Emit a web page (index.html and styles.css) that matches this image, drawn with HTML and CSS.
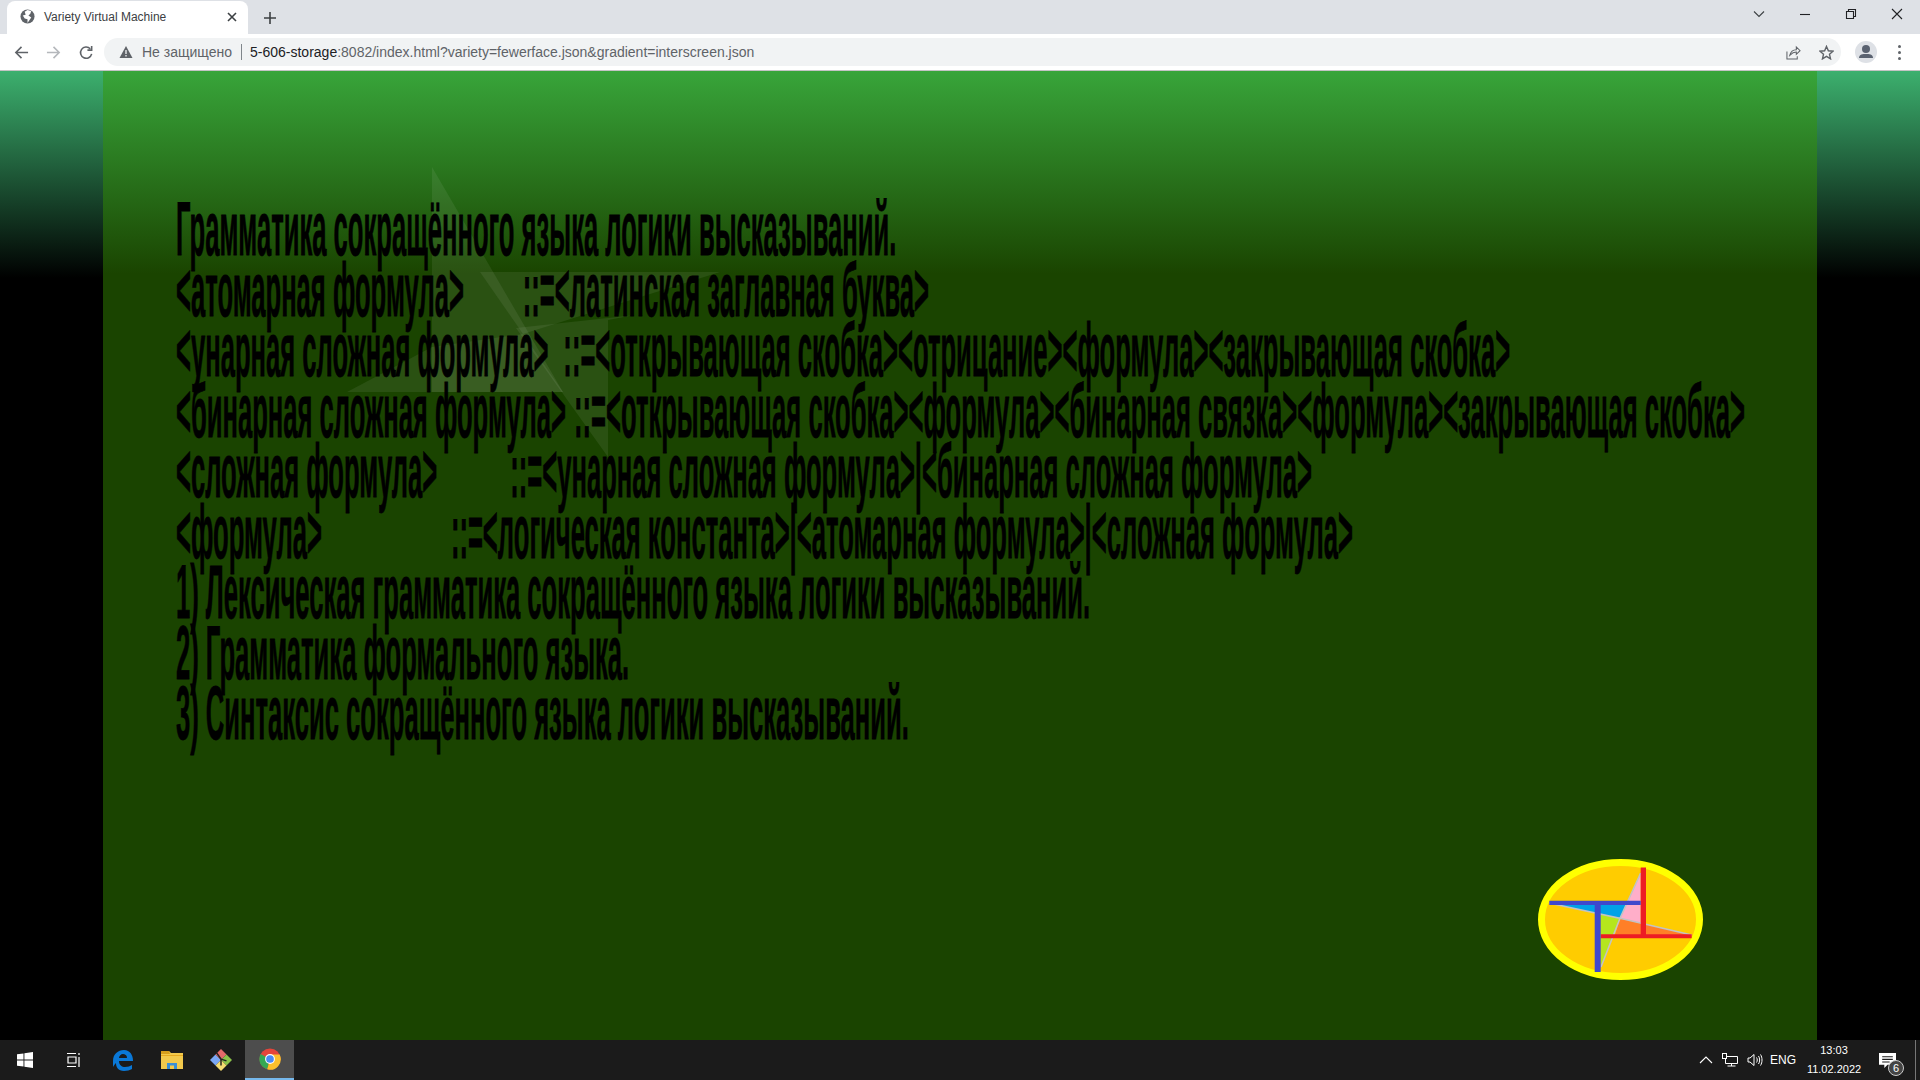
FILE: index.html
```html
<!DOCTYPE html>
<html lang="en">
<head>
  <meta charset="UTF-8">
  <title>Variety Virtual Machine</title>
  <link rel="stylesheet" href="styles.css">
</head>
<body>
  <header class="browser">
    <div class="tabstrip">
      <div class="tab">
        <svg class="favicon" viewBox="0 0 16 16"><circle cx="8" cy="8" r="7.5" fill="#5f6368"/><path d="M8 1 L5 3 L6 6 L3 7 L5 10 L8 11 L8 15 L10 12 L12 9 L9 7 L11 5 L12 2Z" fill="#fff"/></svg>
        <span class="tab-title">Variety Virtual Machine</span>
        <svg class="tab-close" viewBox="0 0 10 10"><path d="M1 1L9 9M9 1L1 9" stroke="#3c4043" stroke-width="1.6"/></svg>
      </div>
      <svg class="new-tab" viewBox="0 0 12 12"><path d="M6 0V12M0 6H12" stroke="#3c4043" stroke-width="1.6"/></svg>
      <div class="window-buttons">
        <svg class="win-icon" viewBox="0 0 12 12"><path d="M1 3.5L6 8.5L11 3.5" fill="none" stroke="#3c4043" stroke-width="1.1"/></svg>
        <svg class="win-icon" viewBox="0 0 12 12"><path d="M1 6.5H11" stroke="#202124" stroke-width="1.1"/></svg>
        <svg class="win-icon" viewBox="0 0 12 12"><path d="M1.5 3.5H8.5V10.5H1.5ZM3.5 3.5V1.5H10.5V8.5H8.5" fill="none" stroke="#202124" stroke-width="1.1"/></svg>
        <svg class="win-icon" viewBox="0 0 12 12"><path d="M1 1L11 11M11 1L1 11" stroke="#202124" stroke-width="1.1"/></svg>
      </div>
    </div>
    <div class="toolbar">
      <svg class="nav-icon" viewBox="0 0 16 16"><path d="M15 8H2M8 2L2 8L8 14" fill="none" stroke="#5f6368" stroke-width="1.7"/></svg>
      <svg class="nav-icon" viewBox="0 0 16 16"><path d="M1 8H14M8 2L14 8L8 14" fill="none" stroke="#b5b8bc" stroke-width="1.7"/></svg>
      <svg class="nav-icon" viewBox="0 0 16 16"><path d="M13.5 9.5A6 6 0 1 1 12 4M13.5 1V5.5H9" fill="none" stroke="#5f6368" stroke-width="1.7"/></svg>
      <div class="omnibox">
        <svg class="warn" viewBox="0 0 14 14"><path d="M7 1L13.5 13H0.5Z" fill="#5f6368"/><path d="M7 5V9M7 10V11.5" stroke="#f1f3f4" stroke-width="1.3"/></svg>
        <span class="not-secure">Не защищено</span>
        <span class="sep"></span>
        <span class="url"><b>5-606-storage</b>:8082/index.html?variety=fewerface.json&amp;gradient=interscreen.json</span>
        <svg class="omni-icon share" viewBox="0 0 16 16"><path d="M1 7V15H12V12M4 11C5 7 8 5 11 5V2L15 6L11 10V7.5C8 7.5 6 9 4 11Z" fill="none" stroke="#5f6368" stroke-width="1.1"/></svg>
        <svg class="omni-icon" viewBox="0 0 16 16"><path d="M8 1.5L10 6.2L15 6.6L11.2 9.9L12.3 14.8L8 12.2L3.7 14.8L4.8 9.9L1 6.6L6 6.2Z" fill="none" stroke="#5f6368" stroke-width="1.5"/></svg>
      </div>
      <div class="avatar"><svg viewBox="0 0 22 22"><circle cx="11" cy="8" r="4" fill="#5a6270"/><path d="M4 17C4 13 8 13 11 13C14 13 18 13 18 17Z" fill="#5a6270"/></svg></div>
      <div class="dots"><i></i><i></i><i></i></div>
    </div>
  </header>

  <main class="viewport">
    <div class="stage">
      <svg class="star" viewBox="0 0 420 440">
        <g fill="#fff" fill-opacity="0.07">
          <polygon points="112,17 243,242 112,242"/>
          <polygon points="400,122 160,122 203,184"/>
          <polygon points="288,307 196,178 315,165 288,170"/>
          <polygon points="27,242 112,197 203,184 243,242"/>
        </g>
      </svg>
      <div class="slide">
        <div class="slide-text">
          <p>Грамматика сокращённого языка логики высказываний.</p>
          <p>&lt;атомарная формула&gt;<span class="gap-a"></span>::=&lt;латинская заглавная буква&gt;</p>
          <p>&lt;унарная сложная формула&gt;<span class="gap-b"></span>::=&lt;открывающая скобка&gt;&lt;отрицание&gt;&lt;формула&gt;&lt;закрывающая скобка&gt;</p>
          <p>&lt;бинарная сложная формула&gt;<span class="gap-c"></span>::=&lt;открывающая скобка&gt;&lt;формула&gt;&lt;бинарная связка&gt;&lt;формула&gt;&lt;закрывающая скобка&gt;</p>
          <p>&lt;сложная формула&gt;<span class="gap-d"></span>::=&lt;унарная сложная формула&gt;|&lt;бинарная сложная формула&gt;</p>
          <p>&lt;формула&gt;<span class="gap-e"></span>::=&lt;логическая константа&gt;|&lt;атомарная формула&gt;|&lt;сложная формула&gt;</p>
          <p>1) Лексическая грамматика сокращённого языка логики высказываний.</p>
          <p>2) Грамматика формального языка.</p>
          <p>3) Синтаксис сокращённого языка логики высказываний.</p>
        </div>
      </div>
      <svg class="badge" viewBox="0 0 165 121">
        <ellipse cx="82.5" cy="60.5" rx="79" ry="57" fill="#ffcc00" stroke="#ffff00" stroke-width="7"/>
        <polygon points="11,44 89,44 82,59.3" fill="#00a2e8"/>
        <polygon points="102.7,14 102.7,64 82,59.3 89,44" fill="#ffaec9"/>
        <polygon points="82,59.3 153.7,76 77,76" fill="#ff7f27"/>
        <polygon points="62,55 82,59.3 62.7,108" fill="#b5e61d"/>
        <path d="M11 44L82 59.3L102.7 14M82 59.3L63 108M82 59.3L153.7 76" fill="none" stroke="#c3c3c3" stroke-width="1.6"/>
        <path d="M102.7 8.5H108V75.3H153.7V79.3H62.7V75.3H102.7Z" fill="#ed1c24"/>
        <path d="M11.3 41.7H102.7V46H62.7V113H56.7V46H11.3Z" fill="#3f48cc"/>
      </svg>
    </div>
  </main>

  <footer class="taskbar">
    <div class="task-item">
      <svg class="tb-icon win" viewBox="0 0 16 16"><path d="M0 2.3L6.5 1.4V7.6H0ZM7.4 1.3L16 0V7.6H7.4ZM0 8.4H6.5V14.6L0 13.7ZM7.4 8.4H16V16L7.4 14.7Z" fill="#fff"/></svg>
    </div>
    <div class="task-item">
      <svg class="tb-icon" viewBox="0 0 16 16"><path d="M1 1.5H10M1 14.5H10M2 5H10V11H2ZM13 1V3M13 5V15" fill="none" stroke="#fff" stroke-width="1.2"/></svg>
    </div>
    <div class="task-item">
      <svg class="tb-icon large" viewBox="0 0 22 22"><path d="M1 12C1 5 6 1 12 1C18 1 21 6 21 12H7C7 16 10 18 13 18C16 18 18 17 20 16V20C18 21 15 22 12 22C6 22 4 18 4 14C3 15 2 16 1 18ZM7 9H15C15 6 13 5 11 5C9 5 7 7 7 9Z" fill="#0a78d7"/></svg>
    </div>
    <div class="task-item">
      <svg class="tb-icon large" viewBox="0 0 22 22"><path d="M0 2H8L10 4H22V20H0Z" fill="#f2c94c"/><path d="M0 2H8L9 5H0Z" fill="#d69e1c"/><path d="M0 6H22V7H0Z" fill="#e6a91f"/><path d="M6 20V14H16V20H13V16.5H9V20Z" fill="#3a8fd6"/></svg>
    </div>
    <div class="task-item">
      <svg class="tb-icon large" viewBox="0 0 24 24"><path d="M12 12L6 6L0 12L6 18Z" fill="#7aa7f5"/><path d="M12 12L18 6L12 0L6 6Z" fill="#e36a6a"/><path d="M12 12L18 18L24 12L18 6Z" fill="#8bc34a"/><path d="M12 12L6 18L12 24L18 18Z" fill="#f5dc71"/><path d="M7 4L12 11V18M12 11L18 13" fill="none" stroke="#222" stroke-width="1.6"/></svg>
    </div>
    <div class="task-item chrome">
      <svg class="tb-icon large" viewBox="0 0 24 24"><circle cx="12" cy="12" r="11.5" fill="#e5453b"/><path d="M12 12L1.8 6.5A11.5 11.5 0 0 0 9 23.2Z" fill="#34a853"/><path d="M12 12L9 23.2A11.5 11.5 0 0 0 22.5 7H12Z" fill="#fbc02d"/><circle cx="12" cy="12" r="5.4" fill="#fff"/><circle cx="12" cy="12" r="4.2" fill="#4a8af4"/></svg>
    </div>
    <div class="tray">
      <svg class="tray-icon" viewBox="0 0 14 14"><path d="M1 10L7 4L13 10" fill="none" stroke="#fff" stroke-width="1.1"/></svg>
      <svg class="tray-icon wide" viewBox="0 0 16 14"><path d="M3.5 3.5H15.5V10.5H3.5ZM9.5 10.5V13M5.5 13H13.5" fill="none" stroke="#fff"/><rect x="0.5" y="0.5" width="4" height="5" fill="#1b1b1b" stroke="#fff"/></svg>
      <svg class="tray-icon wide" viewBox="0 0 16 14"><path d="M1 5H3L7 1.5V12.5L3 9H1ZM9.5 4.5C10.5 6 10.5 8 9.5 9.5M11.5 3C13 5 13 9 11.5 11M13.5 1.5C15.5 4.5 15.5 9.5 13.5 12.5" fill="none" stroke="#fff"/></svg>
      <span class="lang">ENG</span>
      <div class="clock"><span>13:03</span><span>11.02.2022</span></div>
      <div class="notify">
        <svg viewBox="0 0 16 14"><path d="M0 0H16V11H8L5 14V11H0Z" fill="#fff"/><path d="M3 3.5H13M3 6H13M3 8.5H10" stroke="#1b1b1b"/></svg>
        <span class="notify-count">6</span>
      </div>
      <span class="show-desktop"></span>
    </div>
  </footer>
</body>
</html>
```

FILE: styles.css
```css
html, body {
  margin: 0;
  height: 100%;
}
body {
  width: 1920px;
  height: 1080px;
  overflow: hidden;
  display: flex;
  flex-direction: column;
  font-family: "Liberation Sans", Arial, sans-serif;
  background: #000;
}

/* browser chrome */
.browser {
  flex: none;
  background: #fff;
}
.tabstrip {
  height: 34px;
  background: #dee1e6;
  display: flex;
  align-items: flex-end;
}
.tab {
  width: 241px;
  height: 33px;
  margin-left: 7px;
  background: #fff;
  border-radius: 8px 8px 0 0;
  display: flex;
  align-items: center;
  padding: 0 11px 2px 13px;
  box-sizing: border-box;
}
.favicon {
  width: 15px;
  height: 15px;
  margin-right: 9px;
}
.tab-title {
  flex: 1;
  font-size: 12px;
  color: #3c4043;
}
.tab-close {
  width: 10px;
  height: 10px;
}
.new-tab {
  width: 12px;
  height: 12px;
  margin: 0 0 10px 16px;
}
.window-buttons {
  margin-left: auto;
  align-self: stretch;
  display: flex;
  align-items: center;
  gap: 34px;
  padding: 0 17px 6px 0;
}
.win-icon {
  width: 12px;
  height: 12px;
}
.toolbar {
  height: 37px;
  display: flex;
  align-items: center;
  padding: 0 19px 0 14px;
  border-bottom: 1px solid #c4c4c4;
  box-sizing: border-box;
}
.nav-icon {
  width: 15px;
  height: 15px;
  margin-right: 17px;
}
.nav-icon:nth-child(3) {
  margin-left: 1px;
}
.omnibox {
  flex: 1;
  height: 28px;
  margin-left: -7px;
  background: #f1f3f4;
  border-radius: 14px;
  display: flex;
  align-items: center;
  padding: 0 7px 0 13px;
  font-size: 14px;
}
.warn {
  width: 14px;
  height: 14px;
  margin: 0 9px 0 2px;
}
.not-secure {
  color: #5f6368;
}
.sep {
  width: 1px;
  height: 16px;
  background: #80868b;
  margin: 0 8px 0 9px;
}
.url {
  flex: 1;
  color: #5f6368;
}
.url b {
  color: #202124;
  font-weight: normal;
}
.omni-icon {
  width: 15px;
  height: 15px;
  margin-left: 18px;
}
.avatar {
  width: 22px;
  height: 22px;
  border-radius: 50%;
  background: #dee1e6;
  margin-left: 14px;
}
.dots {
  display: flex;
  flex-direction: column;
  gap: 3px;
  margin-left: 21px;
}
.dots i {
  width: 3px;
  height: 3px;
  border-radius: 50%;
  background: #5f6368;
}

/* page area */
.viewport {
  flex: 1;
  position: relative;
  padding: 0 103px;
  background: linear-gradient(#3cb06e 0, #000 207px);
  background-repeat: no-repeat;
  background-color: #000;
}
.stage {
  position: relative;
  height: 100%;
  background: linear-gradient(#38a53a 0, #1a4400 203px);
  background-repeat: no-repeat;
  background-color: #1a4400;
}
.slide {
  position: relative;
  padding: 128px 0 0 73px;
}
.slide-text {
  width: 5200px;
  transform: scaleX(0.3368);
  transform-origin: 0 0;
  font-size: 76px;
  font-weight: bold;
  line-height: 60.5px;
  color: #000;
  -webkit-text-stroke: 0.8px #000;
  white-space: nowrap;
}
.slide-text p {
  margin: 0;
}
.gap-a, .gap-b, .gap-c, .gap-d, .gap-e {
  display: inline-block;
}
.gap-a { width: 175px; }
.gap-b { width: 44px; }
.gap-c { width: 24px; }
.gap-d { width: 217px; }
.gap-e { width: 383px; }
.star {
  position: absolute;
  left: 217px;
  top: 79px;
  width: 420px;
  height: 440px;
}
.badge {
  position: absolute;
  left: 1435px;
  top: 788px;
  width: 165px;
  height: 121px;
}

/* windows taskbar */
.taskbar {
  flex: none;
  height: 40px;
  background: #1b1b1b;
  display: flex;
  align-items: center;
  color: #fff;
}
.task-item {
  width: 49px;
  height: 40px;
  display: flex;
  align-items: center;
  justify-content: center;
  box-sizing: border-box;
}
.chrome {
  background: #4d4d4d;
  border-bottom: 2px solid #76b9ed;
}
.tb-icon {
  width: 16px;
  height: 16px;
}
.tb-icon.large {
  width: 22px;
  height: 22px;
}
.tray {
  margin-left: auto;
  display: flex;
  align-items: center;
  height: 100%;
  font-size: 12px;
}
.tray-icon {
  width: 14px;
  height: 14px;
  margin-right: 9px;
}
.tray-icon.wide {
  width: 16px;
}
.lang {
  margin: 0 10px 0 -2px;
}
.clock {
  display: flex;
  flex-direction: column;
  align-items: center;
  font-size: 11px;
  line-height: 19px;
  width: 56px;
}
.notify {
  position: relative;
  width: 17px;
  height: 14px;
  margin: 0 19px 0 17px;
}
.notify svg {
  display: block;
}
.notify-count {
  position: absolute;
  right: -8px;
  bottom: -9px;
  width: 14px;
  height: 14px;
  border-radius: 50%;
  background: #444;
  border: 1px solid #ccc;
  font-size: 11px;
  line-height: 14px;
  text-align: center;
}
.show-desktop {
  width: 1px;
  height: 100%;
  background: #777;
  margin-right: 4px;
}
```
